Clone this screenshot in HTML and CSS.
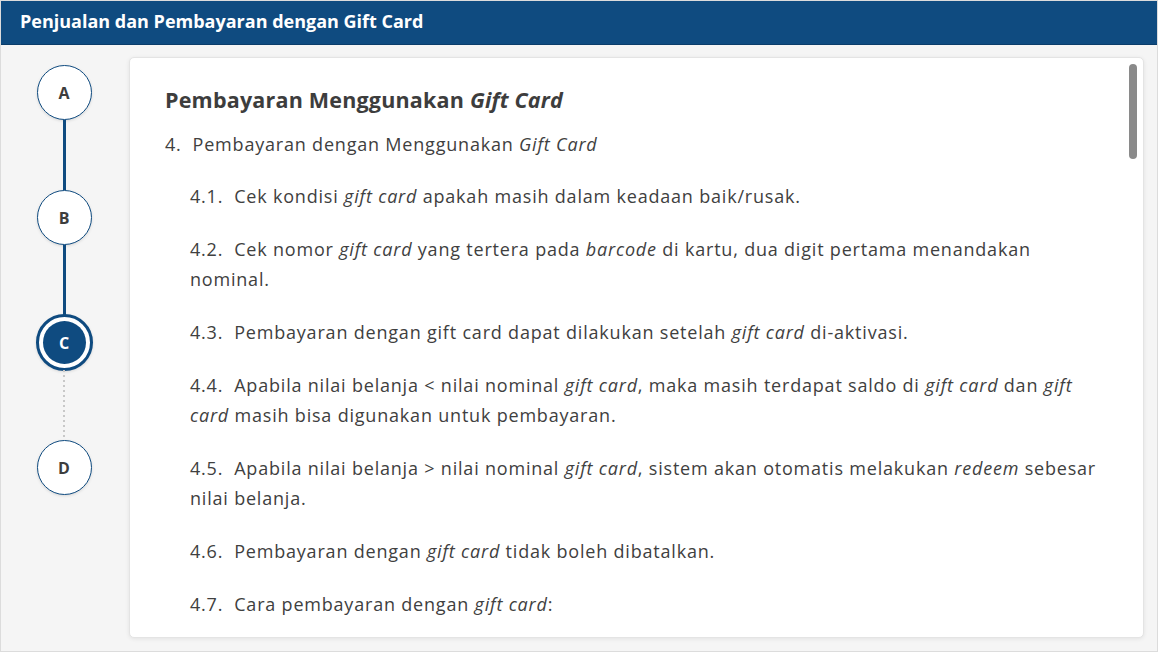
FILE: index.html
```html
<!DOCTYPE html>
<html lang="id">
<head>
<meta charset="utf-8">
<link rel="stylesheet" href="styles.css">
</head>
<body>
<div class="frame">
  <header class="topbar">Penjualan dan Pembayaran dengan Gift Card</header>
  <div class="main">
    <nav class="steps">
      <div class="step">A</div>
      <div class="link solid"></div>
      <div class="step">B</div>
      <div class="link solid"></div>
      <div class="step active"><span>C</span></div>
      <div class="link dotted"></div>
      <div class="step">D</div>
    </nav>
    <section class="card">
      <div class="content">
        <h2 class="title">Pembayaran Menggunakan <em>Gift Card</em></h2>
        <p class="lead">4.&nbsp; Pembayaran dengan Menggunakan <em>Gift Card</em></p>
        <ol class="items">
          <li>4.1.&nbsp; Cek kondisi <em>gift card</em> apakah masih dalam keadaan baik/rusak.</li>
          <li>4.2.&nbsp; Cek nomor <em>gift card</em> yang tertera pada <em>barcode</em> di kartu, dua digit pertama menandakan nominal.</li>
          <li>4.3.&nbsp; Pembayaran dengan gift card dapat dilakukan setelah <em>gift card</em> di-aktivasi.</li>
          <li>4.4.&nbsp; Apabila nilai belanja &lt; nilai nominal <em>gift card</em>, maka masih terdapat saldo di <em>gift card</em> dan <em>gift card</em> masih bisa digunakan untuk pembayaran.</li>
          <li>4.5.&nbsp; Apabila nilai belanja &gt; nilai nominal <em>gift card</em>, sistem akan otomatis melakukan <em>redeem</em> sebesar nilai belanja.</li>
          <li>4.6.&nbsp; Pembayaran dengan <em>gift card</em> tidak boleh dibatalkan.</li>
          <li>4.7.&nbsp; Cara pembayaran dengan <em>gift card</em>:</li>
        </ol>
      </div>
      <div class="scrollbar"><div class="thumb"></div></div>
    </section>
  </div>
</div>
</body>
</html>
```
FILE: styles.css
```css
* { box-sizing: border-box; }
html, body { margin: 0; padding: 0; }
body {
  width: 1158px;
  height: 652px;
  overflow: hidden;
  background: #fff;
  font-family: "Open Sans", "Noto Sans", sans-serif;
}
.frame {
  width: 1158px;
  height: 652px;
  border: 1px solid #dcdcdc;
  background: #f5f5f5;
  display: flex;
  flex-direction: column;
}
.topbar {
  height: 44px;
  flex: none;
  background: #0f4b80;
  color: #fff;
  font-family: "Open Sans", sans-serif;
  font-weight: 700;
  font-size: 18px;
  padding: 8px 0 0 19px;
  border-bottom: 1px solid #0b3d6a;
}
.main {
  flex: 1;
  display: flex;
  padding: 12px 13px 13px 35px;
  min-height: 0;
}
.steps {
  width: 56px;
  flex: none;
  display: flex;
  flex-direction: column;
  align-items: center;
  padding-top: 8px;
  margin-right: 37px;
}
.step {
  width: 55px;
  height: 55px;
  border-radius: 50%;
  border: 1.5px solid #0f4b80;
  background: #fff;
  display: flex;
  align-items: center;
  justify-content: center;
  font-family: "Open Sans", sans-serif;
  font-weight: 700;
  font-size: 16px;
  color: #3d3d3d;
  box-shadow: 0 1px 3px rgba(0,0,0,0.12);
  flex: none;
}
.step.active {
  width: 57px;
  height: 57px;
  margin: -1px 0;
  border: 3px solid #0f4b80;
  padding: 4px;
}
.step.active span {
  width: 100%;
  height: 100%;
  border-radius: 50%;
  background: #0f4b80;
  color: #fff;
  display: flex;
  align-items: center;
  justify-content: center;
}
.link {
  flex: none;
  height: 70px;
  width: 3px;
}
.link.solid { background: #0f4b80; }
.link.dotted {
  width: 2px;
  background: repeating-linear-gradient(to bottom, #c8c8c8 0 2px, transparent 2px 5px);
}
.card {
  flex: 1;
  background: #fff;
  border: 1px solid #e4e4e4;
  border-radius: 5px;
  box-shadow: 0 1px 4px rgba(0,0,0,0.08);
  display: flex;
  overflow: hidden;
  position: relative;
}
.content {
  flex: 1;
  padding: 26px 26px 0 35px;
  color: #404040;
  font-size: 18px;
  letter-spacing: 0.8px;
}
.title {
  margin: 0 0 13px;
  font-size: 21.5px;
  font-weight: 700;
  line-height: 32px;
  color: #3d3d3d;
  letter-spacing: 0.2px;
}
.title em { font-weight: 700; }
.lead {
  margin: 0 0 22px;
  line-height: 30px;
}
.items {
  list-style: none;
  margin: 0;
  padding: 0 0 0 25px;
}
.items li {
  line-height: 30px;
  margin-bottom: 23px;
}
.scrollbar {
  width: 16px;
  flex: none;
  padding: 6px 5px 0 2px;
}
.thumb {
  width: 8px;
  height: 95px;
  border-radius: 4px;
  background: #8a8a8a;
}
```
